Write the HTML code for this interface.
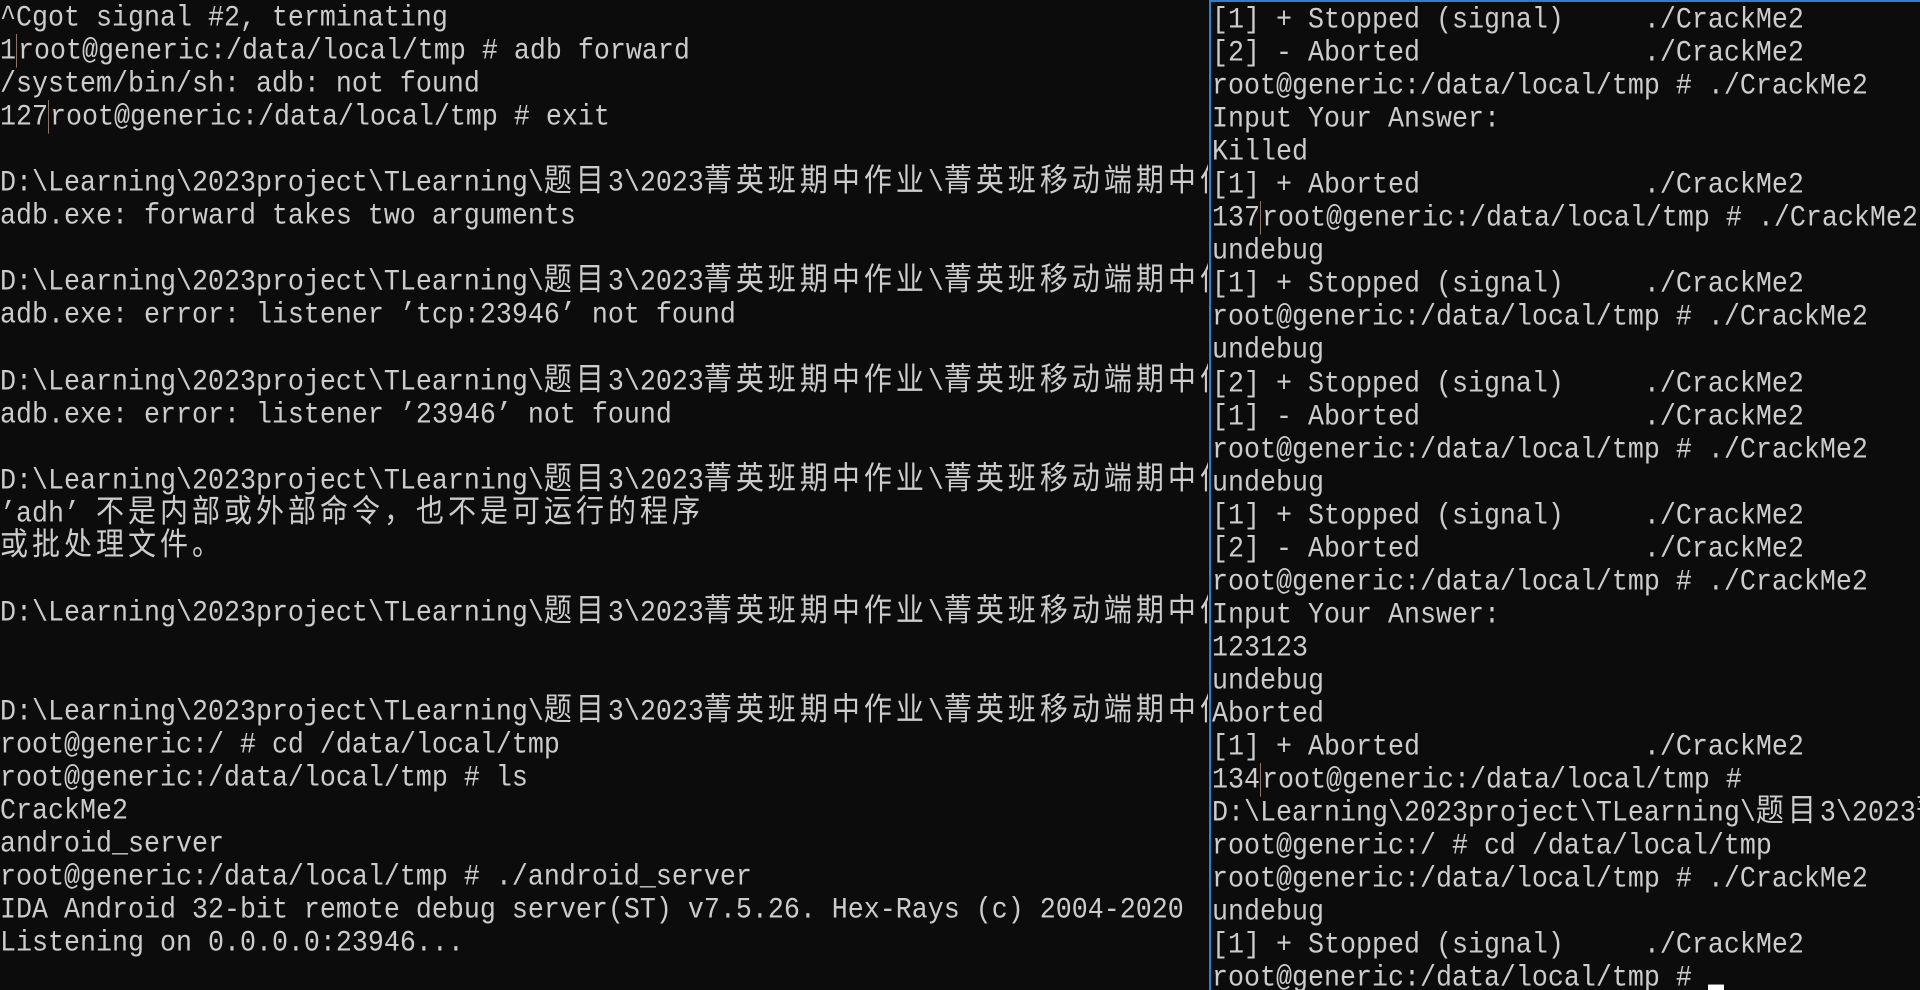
<!DOCTYPE html>
<html><head><meta charset="utf-8"><style>
html,body{margin:0;padding:0;background:#0c0c0c;width:1920px;height:990px;overflow:hidden}
.p{margin:0;font-family:"Liberation Mono","Noto Sans CJK SC",monospace;font-size:26.67px;color:#cccccc;white-space:normal;position:absolute;top:0;padding-top:3px;box-sizing:border-box}
.p div{height:33.06px;line-height:33.06px;overflow:visible;white-space:pre;transform:scaleY(1.12);transform-origin:50% 50%}
.c{font-family:"Noto Sans CJK SC",sans-serif;font-size:28px;letter-spacing:4px;line-height:0}
.s{display:inline-block;width:0;height:30px;border-left:1px solid #8a7560;vertical-align:middle;margin-right:1px;line-height:0}
#l{left:0;width:1208px;height:990px;overflow:hidden}
#r{left:1209px;width:711px;height:990px;overflow:hidden;border-left:2px solid #2b7fd6;border-top:2px solid #2b7fd6;padding-left:1px;top:0}
.cur{display:inline-block;width:16px;height:5px;background:#fff;vertical-align:baseline;margin-bottom:-4px;line-height:0}
</style></head><body>
<div class="p" id="l"><div>^Cgot signal #2, terminating</div><div>1<span class="s"></span>root@generic:/data/local/tmp # adb forward</div><div>/system/bin/sh: adb: not found</div><div>127<span class="s"></span>root@generic:/data/local/tmp # exit</div><div> </div><div>D:\Learning\2023project\TLearning\<span class="c">题目</span>3\2023<span class="c">菁英班期中作业</span>\<span class="c">菁英班移动端期中作业</span></div><div>adb.exe: forward takes two arguments</div><div> </div><div>D:\Learning\2023project\TLearning\<span class="c">题目</span>3\2023<span class="c">菁英班期中作业</span>\<span class="c">菁英班移动端期中作业</span></div><div>adb.exe: error: listener ’tcp:23946’ not found</div><div> </div><div>D:\Learning\2023project\TLearning\<span class="c">题目</span>3\2023<span class="c">菁英班期中作业</span>\<span class="c">菁英班移动端期中作业</span></div><div>adb.exe: error: listener ’23946’ not found</div><div> </div><div>D:\Learning\2023project\TLearning\<span class="c">题目</span>3\2023<span class="c">菁英班期中作业</span>\<span class="c">菁英班移动端期中作业</span></div><div>’adh’ <span class="c">不是内部或外部命令，也不是可运行的程序</span></div><div><span class="c">或批处理文件。</span></div><div> </div><div>D:\Learning\2023project\TLearning\<span class="c">题目</span>3\2023<span class="c">菁英班期中作业</span>\<span class="c">菁英班移动端期中作业</span></div><div> </div><div> </div><div>D:\Learning\2023project\TLearning\<span class="c">题目</span>3\2023<span class="c">菁英班期中作业</span>\<span class="c">菁英班移动端期中作业</span></div><div>root@generic:/ # cd /data/local/tmp</div><div>root@generic:/data/local/tmp # ls</div><div>CrackMe2</div><div>android_server</div><div>root@generic:/data/local/tmp # ./android_server</div><div>IDA Android 32-bit remote debug server(ST) v7.5.26. Hex-Rays (c) 2004-2020</div><div>Listening on 0.0.0.0:23946...</div></div>
<div class="p" id="r"><div>[1] + Stopped (signal)     ./CrackMe2</div><div>[2] - Aborted              ./CrackMe2</div><div>root@generic:/data/local/tmp # ./CrackMe2</div><div>Input Your Answer:</div><div>Killed</div><div>[1] + Aborted              ./CrackMe2</div><div>137<span class="s"></span>root@generic:/data/local/tmp # ./CrackMe2</div><div>undebug</div><div>[1] + Stopped (signal)     ./CrackMe2</div><div>root@generic:/data/local/tmp # ./CrackMe2</div><div>undebug</div><div>[2] + Stopped (signal)     ./CrackMe2</div><div>[1] - Aborted              ./CrackMe2</div><div>root@generic:/data/local/tmp # ./CrackMe2</div><div>undebug</div><div>[1] + Stopped (signal)     ./CrackMe2</div><div>[2] - Aborted              ./CrackMe2</div><div>root@generic:/data/local/tmp # ./CrackMe2</div><div>Input Your Answer:</div><div>123123</div><div>undebug</div><div>Aborted</div><div>[1] + Aborted              ./CrackMe2</div><div>134<span class="s"></span>root@generic:/data/local/tmp #</div><div>D:\Learning\2023project\TLearning\<span class="c">题目</span>3\2023<span class="c">菁英班</span></div><div>root@generic:/ # cd /data/local/tmp</div><div>root@generic:/data/local/tmp # ./CrackMe2</div><div>undebug</div><div>[1] + Stopped (signal)     ./CrackMe2</div><div>root@generic:/data/local/tmp # <span class="cur"></span></div></div>
</body></html>
